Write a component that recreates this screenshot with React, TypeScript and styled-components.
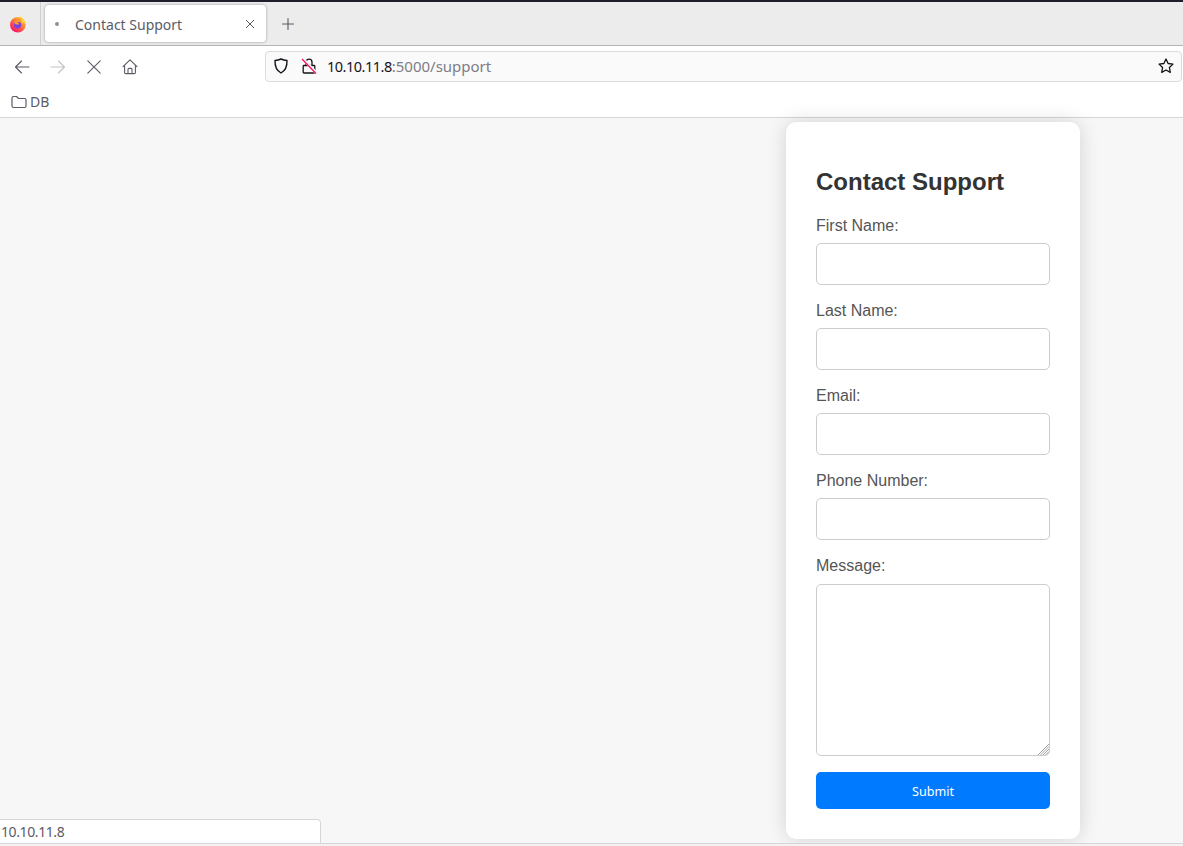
import React from 'react'
import styled, { createGlobalStyle } from 'styled-components'

const GlobalStyle = createGlobalStyle`
  html, body {
    margin: 0;
    padding: 0;
    height: 100%;
    overflow: hidden;
    background: #f9f9fb;
  }
  * {
    box-sizing: border-box;
  }
`

const UI_FONT = `"Noto Sans", "Open Sans", sans-serif`
const PAGE_FONT = `"Liberation Sans", Arial, sans-serif`

const Window = styled.div`
  position: relative;
  display: flex;
  flex-direction: column;
  width: 1183px;
  height: 846px;
  overflow: hidden;
  border-top: 2px solid #1f1f2b;
  font-family: ${UI_FONT};
`

const TabBar = styled.div`
  display: flex;
  align-items: center;
  height: 44px;
  flex: none;
  background: #ececec;
  border-bottom: 1px solid #b4b4b6;
`

const AppButton = styled.div`
  display: flex;
  align-items: center;
  justify-content: center;
  width: 41px;
  height: 43px;
  padding-right: 4px;
  border-right: 1px solid #cfcfd1;
`

const Tab = styled.div`
  display: flex;
  align-items: center;
  width: 221px;
  height: 37px;
  margin-left: 4px;
  padding: 0 11px 0 10px;
  background: #fff;
  border-radius: 4px;
  box-shadow: 0 0 3px rgba(0, 0, 0, 0.35);
`

const TabDot = styled.span`
  width: 4px;
  height: 4px;
  margin-right: 16px;
  border-radius: 50%;
  background: #8f8f9d;
`

const TabTitle = styled.span`
  flex: 1;
  padding-top: 2px;
  font-size: 14px;
  color: #5b5b66;
  white-space: nowrap;
`

const NewTab = styled.div`
  display: flex;
  margin-left: 14px;
  color: #5b5b66;
`

const NavBar = styled.div`
  display: flex;
  align-items: center;
  height: 42px;
  flex: none;
  padding: 0 1px 2px 0;
  background: #fff;
`

const NavButtons = styled.div`
  display: flex;
  align-items: center;
  gap: 20px;
  width: 265px;
  padding: 2px 0 0 14px;
`

const UrlBar = styled.div`
  display: flex;
  align-items: center;
  flex: 1;
  height: 31px;
  padding: 0 7px 0 7px;
  background: #fafafa;
  border: 1px solid #dcdcdf;
  border-radius: 4px;
`

const UrlText = styled.div`
  flex: 1;
  margin-left: 10px;
  font-size: 15px;
  color: #7d7d86;
  white-space: nowrap;
`

const UrlHost = styled.span`
  font-size: 14.5px;
  letter-spacing: -0.5px;
  color: #15141a;
`

const LockWrap = styled.div`
  display: flex;
  margin-left: 12px;
`

const BookmarkBar = styled.div`
  display: flex;
  align-items: center;
  gap: 3px;
  height: 30px;
  flex: none;
  padding: 0 0 2px 11px;
  background: #fff;
  border-bottom: 1px solid #d6d6d8;
  font-size: 14px;
  color: #5b5b66;
`

const Page = styled.main`
  display: flex;
  justify-content: flex-end;
  flex: none;
  height: 725px;
  padding: 4px 103px 0 0;
  background: #f7f7f7;
  font-family: ${PAGE_FONT};
`

const Card = styled.form`
  display: flex;
  flex-direction: column;
  width: 294px;
  height: 717px;
  padding: 30px;
  background: #fff;
  border-radius: 10px;
  box-shadow: 0 0 20px rgba(0, 0, 0, 0.15);
`

const Title = styled.h2`
  margin: 16px 0 21px;
  font-size: 24px;
  line-height: 28px;
  font-weight: 700;
  color: #333;
`

const Label = styled.label`
  display: block;
  height: 18px;
  margin-bottom: 8px;
  font-size: 16px;
  line-height: 18px;
  color: #555;
`

const Input = styled.input`
  display: block;
  width: 100%;
  height: 42px;
  margin-bottom: 17px;
  padding: 10px;
  background: #fff;
  border: 1px solid #ccc;
  border-radius: 5px;
  font-size: 16px;
`

const TextAreaWrap = styled.div`
  position: relative;
  height: 172px;
  margin: 1px 0 16px;
`

const TextArea = styled.textarea`
  display: block;
  width: 100%;
  height: 100%;
  padding: 10px;
  background: #fff;
  border: 1px solid #ccc;
  border-radius: 5px;
  font-size: 16px;
  resize: none;
`

const Resizer = styled.svg`
  position: absolute;
  right: 1px;
  bottom: 1px;
`

const Submit = styled.button`
  width: 100%;
  height: 37px;
  padding: 2px 0 0;
  background: #007bff;
  border: none;
  border-radius: 5px;
  font-family: ${UI_FONT};
  font-size: 12.6px;
  color: #fff;
`

const StatusPanel = styled.div`
  position: absolute;
  left: 0;
  bottom: 3px;
  width: 321px;
  height: 24px;
  padding-left: 1px;
  background: #fff;
  border: 1px solid #d6d6d8;
  border-left: none;
  border-bottom: none;
  border-top-right-radius: 4px;
  font-size: 14px;
  letter-spacing: -0.4px;
  line-height: 23px;
  color: #5b5b66;
`

const BottomEdge = styled.div`
  flex: 1;
  background: #f3f3f3;
  border-top: 1px solid #d6d6d8;
`

const FirefoxLogo = () => (
  <svg width="18" height="18" viewBox="0 0 18 18">
    <defs>
      <linearGradient id="fxBody" x1="0.8" y1="0.1" x2="0.2" y2="0.9">
        <stop offset="0" stopColor="#ffbd2e" />
        <stop offset="0.45" stopColor="#ff7139" />
        <stop offset="1" stopColor="#f5156c" />
      </linearGradient>
    </defs>
    <circle cx="8.8" cy="9.800" r="7.800" fill="url(#fxBody)" />
    <path d="M11 1c2.800 1.600 5 4.400 5.400 7.800l-3.800-1.600C12.600 5 12.200 2.800 11 1z" fill="#ffd23a" />
    <circle cx="8.600" cy="9.800" r="3.600" fill="#7542e5" />
    <path d="M5.200 6.400c2.200-1.800 6-1.200 7.400 1.800-1.400-1-3.200-1.400-4.400-.8 1.400 0 2.200 1 2 2H7.200C6 9 5.200 7.800 5.200 6.400z" fill="#ff9a2b" />
  </svg>
)

const Icon = ({ children, muted }: { children: React.ReactNode; muted?: boolean }) => (
  <svg
    width="16"
    height="16"
    viewBox="0 0 16 16"
    fill="none"
    stroke={muted ? '#c3c3c9' : '#5b5b66'}
    strokeWidth="1.100"
    strokeLinecap="round"
    strokeLinejoin="round"
  >
    {children}
  </svg>
)

const App: React.FC = () => {
  return (
    <Window>
      <GlobalStyle />
      <TabBar>
        <AppButton>
          <FirefoxLogo />
        </AppButton>
        <Tab>
          <TabDot />
          <TabTitle>Contact Support</TabTitle>
          <svg width="10" height="10" viewBox="0 0 10 10" stroke="#5b5b66" strokeWidth="1">
            <path d="M1 1l8 8M9 1l-8 8" />
          </svg>
        </Tab>
        <NewTab>
          <Icon>
            <path d="M8 2.500v11M2.500 8h11" />
          </Icon>
        </NewTab>
      </TabBar>

      <NavBar>
        <NavButtons>
          <Icon>
            <path d="M15 8H1.500M7.500 2L1.500 8l6 6" />
          </Icon>
          <Icon muted>
            <path d="M1 8h13.500M8.500 2l6 6-6 6" />
          </Icon>
          <Icon>
            <path d="M1.800 1.800l12.400 12.400M14.200 1.800L1.800 14.200" />
          </Icon>
          <Icon>
            <path d="M1 7.600L8 .8l7 6.800M2.600 6.200v7.200a1.200 1.200 0 0 0 1.200 1.200h8.400a1.200 1.200 0 0 0 1.200-1.200V6.200M6 14.600v-4.200a1 1 0 0 1 1-1h2a1 1 0 0 1 1 1v4.200" />
          </Icon>
        </NavButtons>
        <UrlBar>
          <svg width="16" height="16" viewBox="0 0 16 16" fill="none" stroke="#15141a" strokeWidth="1.400" strokeLinejoin="round">
            <path d="M8 1c2 1 4 1.400 6 1.500.2 5.600-1.400 10-6 12.500C3.400 12.500 1.800 8.100 2 2.500 4 2.400 6 2 8 1z" />
          </svg>
          <LockWrap>
            <svg width="16" height="16" viewBox="0 0 16 16" fill="none">
              <path
                d="M5 7V4.200a3 3 0 0 1 6 0V7M3 7.500h10a.8.8 0 0 1 .8.8v5.900a.8.8 0 0 1-.8.8H3a.8.8 0 0 1-.8-.8V8.300a.8.8 0 0 1 .8-.8z"
                stroke="#15141a"
                strokeWidth="1.300"
              />
              <path d="M1.500 .5l13.500 14" stroke="#fafafa" strokeWidth="3" />
              <path d="M1 1l14 14.500" stroke="#ff0a55" strokeWidth="1.200" />
            </svg>
          </LockWrap>
          <UrlText>
            <UrlHost>10.10.11.8</UrlHost>:5000/support
          </UrlText>
          <svg width="16" height="16" viewBox="0 0 16 16" fill="none" stroke="#15141a" strokeWidth="1.300" strokeLinejoin="round">
            <path d="M8 1l2.100 4.500 4.900.6-3.600 3.400.9 4.900L8 12l-4.300 2.400.9-4.900L1 6.100l4.900-.6z" />
          </svg>
        </UrlBar>
      </NavBar>

      <BookmarkBar>
        <svg width="16" height="16" viewBox="0 0 16 16" fill="none" stroke="#5b5b66" strokeWidth="1.200" strokeLinejoin="round">
          <path d="M1 4a1.500 1.500 0 0 1 1.500-1.500h3l2 2h6A1.500 1.500 0 0 1 15 6v6a1.500 1.500 0 0 1-1.500 1.500h-11A1.500 1.500 0 0 1 1 12z" />
        </svg>
        DB
      </BookmarkBar>

      <Page>
        <Card>
          <Title>Contact Support</Title>
          <Label>First Name:</Label>
          <Input type="text" />
          <Label>Last Name:</Label>
          <Input type="text" />
          <Label>Email:</Label>
          <Input type="email" />
          <Label>Phone Number:</Label>
          <Input type="tel" />
          <Label>Message:</Label>
          <TextAreaWrap>
            <TextArea />
            <Resizer width="11" height="11" viewBox="0 0 11 11" stroke="#8a8a8a" strokeWidth="0.800">
              <path d="M0 11L11 0M2.500 11L11 2.500M5 11l6-6M7.500 11L11 7.500" />
            </Resizer>
          </TextAreaWrap>
          <Submit type="button">Submit</Submit>
        </Card>
      </Page>
      <BottomEdge />

      <StatusPanel>10.10.11.8</StatusPanel>
    </Window>
  )
}

export default App
